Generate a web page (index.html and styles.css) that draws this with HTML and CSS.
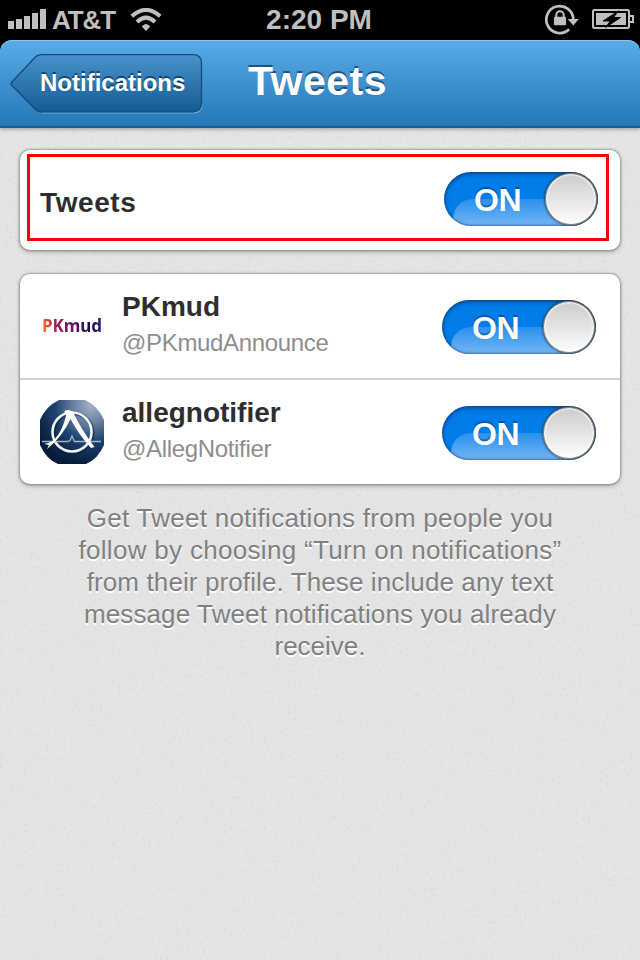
FILE: index.html
```html
<!DOCTYPE html>
<html lang="en">
<head>
<meta charset="utf-8">
<title>Tweets</title>
<link rel="stylesheet" href="styles.css">
</head>
<body>
<svg class="paper" width="640" height="960" aria-hidden="true">
  <filter id="grain" x="0" y="0" width="100%" height="100%">
    <feTurbulence type="fractalNoise" baseFrequency="0.33" numOctaves="3" seed="4"/>
    <feColorMatrix values="0 0 0 0 0.35  0 0 0 0 0.35  0 0 0 0 0.35  0.5 0 0 0 -0.29"/>
  </filter>
  <rect width="640" height="960" filter="url(#grain)"/>
</svg>
<header class="status">
  <div class="carrier">
    <svg width="38" height="20" viewBox="0 0 38 20" fill="#bfbfbf"><path d="M0 12h6v8H0zM8 10h6v10H8zM16 7h6v13h-6zM24 4h6v16h-6zM32 0h6v20h-6z"/></svg>
    <span class="network">AT&amp;T</span>
    <svg class="wifi" width="32" height="24" viewBox="0 0 32 24" fill="none" stroke="#bfbfbf"><path d="M1.800 8.300Q16-4.500 30.200 8.300" stroke-width="4"/><path d="M7 14Q16 5.400 25 14" stroke-width="4"/><path d="M11.800 18.500Q16 13.500 20.200 18.500L16 23Z" fill="#bfbfbf" stroke="none"/></svg>
  </div>
  <span class="time">2:20 PM</span>
  <div class="indicators">
    <svg width="34" height="31" viewBox="0 0 34 31"><path d="M24.200 25.300A13.500 13.500 0 1 1 28.300 15.500" fill="none" stroke="#bfbfbf" stroke-width="2.700"/><path d="M22.800 15h11l-5.500 6.500z" fill="#bfbfbf"/><rect x="9" y="12.700" width="12" height="8.500" rx="1" fill="#bfbfbf"/><path d="M11.300 14v-3a3.700 3.700 0 0 1 7.400 0v3" fill="none" stroke="#bfbfbf" stroke-width="2"/></svg>
    <svg width="42" height="20" viewBox="0 0 42 20"><rect x="1" y="1" width="36" height="18" rx="1.500" fill="none" stroke="#bfbfbf" stroke-width="2"/><path d="M4 4h30v12H4zM38 6h4v8h-4v-2h2V8h-2z" fill="#bfbfbf"/><path d="M26.500 2L11 12h7.500L13.500 18.500 28.500 8.500H21.500z" fill="#000" stroke="#000"/></svg>
  </div>
</header>
<nav class="nav">
  <a class="back">
    <svg class="back-shape" width="194" height="62" viewBox="0 0 194 62">
      <defs><linearGradient id="bg" x2="0" y2="1"><stop stop-color="#4893cd"/><stop offset="1" stop-color="#135b94"/></linearGradient></defs>
      <path d="M32 59H183Q192 59 192 50" fill="none" stroke="#6aafe2" stroke-width="1.200"/>
      <path d="M32 .7H183Q191.500 .7 191.500 9V49Q191.500 57.800 183 57.800H32Q27 57.800 24 54L1.500 31Q.5 30 1.500 28.500L24 4.500Q27 .7 32 .7Z" fill="url(#bg)" stroke="#144b78" stroke-width="1.300"/>
    </svg>
    <span class="back-label">Notifications</span>
  </a>
  <h1 class="title">Tweets</h1>
</nav>
<main class="content">
  <section class="card">
    <div class="row row-main">
      <span class="name name-main">Tweets</span>
      <div class="switch"><span class="on">ON</span><i class="knob"></i></div>
    </div>
  </section>
  <section class="card">
    <div class="row">
      <div class="avatar logo"><span class="pk">PKmud</span></div>
      <div class="who"><span class="name">PKmud</span><span class="handle">@PKmudAnnounce</span></div>
      <div class="switch"><span class="on">ON</span><i class="knob"></i></div>
    </div>
    <div class="row">
      <svg class="avatar" width="64" height="64" viewBox="0 0 64 64">
        <defs>
          <radialGradient id="al" cx=".8" cy=".08" r=".95"><stop stop-color="#a5b3c9"/><stop offset=".3" stop-color="#677f9f"/><stop offset=".6" stop-color="#1d4270"/><stop offset="1" stop-color="#061c3a"/></radialGradient>
          <clipPath id="round"><path d="M19 0H45Q58 6 64 20V45Q58 59 46 64H18Q6 59 0 45V20Q6 6 19 0Z"/></clipPath>
        </defs>
        <g clip-path="url(#round)">
          <rect width="64" height="64" fill="url(#al)"/>
          <circle cx="33" cy="33" r="19.500" fill="none" stroke="#061a35" stroke-width="4" opacity=".45"/>
          <circle cx="32" cy="32" r="19.500" fill="none" stroke="#f2f5f8" stroke-width="2.600"/>
          <path d="M2 41.500H28L30 40.500 32 36 34.500 41.500H61" fill="none" stroke="#a4b6cc" stroke-width="1.300"/>
          <path d="M24 11.500Q29 8.500 33 12Q41 29 54.500 47L51 48Q39 35 30.500 19Q23 35 11 45.500L7 49L9 45L4 44Q13 43 18 35Q24 26 26.500 13.500Z" fill="#fff"/>
        </g>
      </svg>
      <div class="who"><span class="name">allegnotifier</span><span class="handle">@AllegNotifier</span></div>
      <div class="switch"><span class="on">ON</span><i class="knob"></i></div>
    </div>
  </section>
  <p class="note"><span class="wide">Get Tweet notifications from people you</span><span class="wider">follow by choosing “Turn on notifications”</span><span class="snug">from their profile. These include any text</span><span class="snug">message Tweet notifications you already</span><span>receive.</span></p>
</main>
</body>
</html>
```
FILE: styles.css
```css
* { box-sizing: border-box; }
body {
  margin: 0;
  width: 640px;
  height: 960px;
  overflow: hidden;
  position: relative;
  background: #e4e4e4;
  font-family: "Liberation Sans", Arial, sans-serif;
}
svg { display: block; flex: none; }
.paper { position: absolute; inset: 0; z-index: -1; }
.status {
  height: 40px;
  background: #000;
  color: #bfbfbf;
  display: grid;
  grid-template-columns: 1fr auto 1fr;
  padding: 0 6px 0 8px;
  font-weight: bold;
}
.carrier { display: flex; align-items: flex-start; padding-top: 9px; }
.wifi { margin-top: -1px; }
.network { font-size: 26px; line-height: 22px; margin-left: 6px; width: 78px; letter-spacing: -1.1px; }
.time { font-size: 28px; line-height: 39px; margin-left: -4px; }
.indicators { display: flex; justify-content: flex-end; gap: 13px; padding-top: 4px; }
.indicators svg:last-child { margin-top: 5px; }
.nav {
  height: 88px;
  display: flex;
  align-items: flex-start;
  color: #fff;
  background: linear-gradient(#5aace8, #2577b5);
  border-radius: 12px 12px 0 0;
  border-bottom: 2px solid #175e94;
  box-shadow: inset 0 1px #85c6f2, 0 1px 4px rgba(0,0,0,.35);
  position: relative;
}
.nav::before { content: ""; position: absolute; inset: 0 0 auto; height: 12px; background: #000; z-index: -1; }
.back { width: 194px; height: 62px; margin: 14px 0 0 10px; position: relative; }
.back-shape { position: absolute; inset: 0; }
.back-label { position: relative; display: block; padding-left: 30px; font-weight: bold; font-size: 24px; line-height: 58px; text-shadow: 0 -2px rgba(10,50,85,.75); }
.title { margin: 0 0 0 44px; font-size: 41px; line-height: 82px; text-shadow: 0 -2px rgba(20,65,105,.8); letter-spacing: .5px; }
.content { padding: 22px 20px 0; }
.card { background: #fff; border-radius: 10px; box-shadow: 0 0 2px 1px rgba(0,0,0,.25), 0 2px 5px rgba(0,0,0,.25); margin-bottom: 24px; }
.row { height: 104px; display: flex; align-items: center; padding: 0 24px 0 20px; }
.row + .row { height: 106px; border-top: 2px solid #d2d2d2; }
.row-main { height: 100px; padding-right: 22px; position: relative; }
.row-main::after { content: ""; position: absolute; inset: 4px 11px 9px 7px; border: 3px solid #f00; }
.name { font-size: 28px; font-weight: bold; color: #2e2e2e; line-height: 34px; white-space: nowrap; }
.name-main { padding-top: 5px; letter-spacing: .6px; }
.avatar { flex: none; width: 64px; height: 64px; }
.logo { display: flex; align-items: center; justify-content: center; }
.pk {
  font: bold 17px/24px "Noto Sans", "Open Sans", sans-serif;
  background: linear-gradient(75deg, #f36a30 8%, #a81c50 26%, #5b1466 52%, #1d1045 75%, #2c1c78);
  -webkit-background-clip: text;
  background-clip: text;
  color: transparent;
}
.who { display: flex; flex-direction: column; margin-left: 18px; padding-bottom: 2px; }
.handle { color: #8e8e8e; font-size: 24px; line-height: 37px; white-space: nowrap; letter-spacing: -.33px; }
.switch {
  width: 154px;
  height: 54px;
  margin-left: auto;
  margin-top: 2px;
  border-radius: 27px;
  position: relative;
  overflow: hidden;
  background: #007de9;
}
.row-main .switch { margin-top: -2px; }
.switch::before { content: ""; position: absolute; left: 9px; right: 5px; top: 27px; height: 40px; border-radius: 20px; background: linear-gradient(#2c90ed, #72b6f6 27px); }
.switch::after { content: ""; position: absolute; inset: 0; border-radius: 27px; box-shadow: inset 0 2px 5px rgba(0,35,90,.5), inset 0 0 2px 1px rgba(60,65,75,.5); }
.on { position: relative; z-index: 1; display: block; padding-left: 30px; line-height: 56px; font-size: 32px; font-weight: bold; color: #fff; letter-spacing: -.4px; text-shadow: 0 -2px 1px rgba(0,70,145,.65); }
.knob { position: absolute; z-index: 2; right: 1px; top: 1px; width: 52px; height: 52px; border-radius: 50%; border: 1px solid #858585; background: linear-gradient(#cccccc, #fdfdfd); box-shadow: inset 0 0 2px 1px #fff, 0 0 2px 1px rgba(40,40,40,.6), 6px 0 0 1px #6e6e6e; }
.note { position: relative; top: -6px; margin: 0; display: flex; flex-direction: column; align-items: center; color: #808080; font-size: 26px; line-height: 32px; text-shadow: 0 2px #fff; white-space: nowrap; }
.wide { letter-spacing: .26px; }
.wider { letter-spacing: .31px; }
.snug { letter-spacing: .11px; }
```
